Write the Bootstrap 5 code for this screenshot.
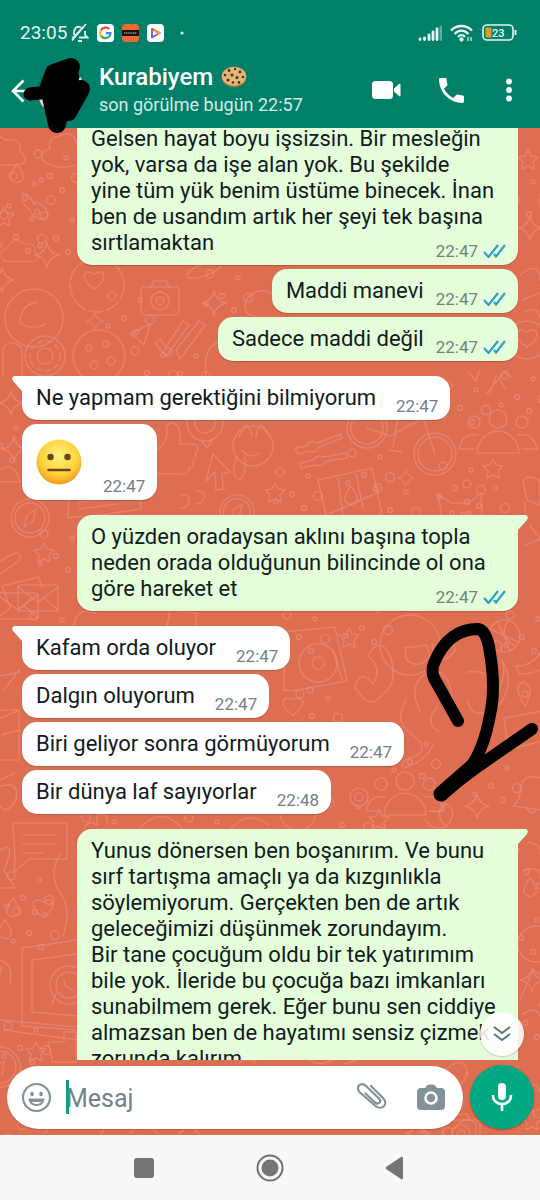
<!DOCTYPE html>
<html lang="tr">
<head>
<meta charset="utf-8">
<meta name="viewport" content="width=device-width, initial-scale=1">
<title>Kurabiyem</title>
<link href="https://cdn.jsdelivr.net/npm/bootstrap@5.3.0/dist/css/bootstrap.min.css" rel="stylesheet">
<style>
  body { font-family: Roboto, "Noto Sans", sans-serif; color: #111b21; background: #f7f8fa; }
  svg { display: block; flex: none; }
  .topbar { background: #008069; z-index: 2; }
  .statusbar { height: 52px; padding: 13px 19px 0 20px; font-size: 19px; line-height: 24px; color: #e3f4f0; }
  .appbar { height: 76px; padding: 2px 25px 0 11px; }
  .bare { border: 0; padding: 0; background: none; color: inherit; flex: none; }
  .contact-name { font-size: 24px; line-height: 28px; font-weight: 500; }
  .contact-seen { font-size: 18px; line-height: 28px; color: #d5ebe6; }
  .avatar { width: 46px; height: 46px; background: #00705c; }
  .scrawl { left: -19px; top: -14px; z-index: 3; }
  .actions { gap: 38px; padding-bottom: 2px; }
  .wall { background: #de6e52; }
  .doodles { left: 0; top: 0; width: 100%; height: 100%; }
  .messages { padding: 0 22px; gap: 4px; min-height: 0; flex: 1 1 0; }
  .bubble { font-size: 22px; line-height: 26px; padding: 9px 14px; border-radius: 15px; max-width: 441px; box-shadow: 0 1px 1px rgba(70,20,10,.25); flex: none; }
  .long { width: 89%; }
  .recv { background: #fff; align-self: flex-start; padding-right: 12px; }
  .sent { background: #e5ffdb; align-self: flex-end; padding-right: 12px; }
  .first { margin-top: 11px; }
  .first::before { content: ""; position: absolute; top: 0; width: 10px; height: 15px; background: inherit; }
  .recv.first { border-top-left-radius: 0; }
  .recv.first::before { left: -10px; clip-path: polygon(0 2px, 2px 0, 10px 0, 10px 15px, 1px 5px); }
  .sent.first { border-top-right-radius: 0; }
  .sent.first::before { right: -10px; clip-path: polygon(0 0, 8px 0, 10px 2px, 9px 5px, 0 15px); }
  .cut { padding-top: 0; margin-top: -2px; border-top-left-radius: 0; border-top-right-radius: 0; }
  .stamp { font-size: 17px; line-height: 20px; color: #71827d; margin-bottom: -5px; gap: 5px; }
  .recv .stamp { color: #71808a; }
  .long .stamp { position: absolute; right: 12px; bottom: 9px; }
  .gap-time { gap: 20px; }
  .sent.gap-time { gap: 12px; }
  .face-row { height: 76px; gap: 21px; padding-bottom: 9px; }
  .jump { width: 44px; height: 44px; right: 16px; bottom: 4px; background: rgba(255,255,255,.88); box-shadow: 0 1px 2px rgba(0,0,0,.2); }
  .big-two { right: 0; top: 490px; }
  .composer { padding: 5px 6px 6px 7px; gap: 7px; }
  .pill { height: 63px; padding: 0 18px 0 14px; background: #fff; box-shadow: 0 1px 1px rgba(70,20,10,.25); gap: 14px; min-width: 0; }
  .entry { font-size: 25px; line-height: 34px; height: 34px; padding-top: 3px; color: #111b21; outline: 0; min-width: 0; }
  .entry::placeholder { color: #75828a; opacity: 1; }
  .caret { width: 3px; height: 34px; left: 0; top: 0; background: #10a080; }
  .mic { width: 64px; height: 64px; background: #00a884; box-shadow: 0 1px 2px rgba(0,0,0,.3); }
  .sysnav { height: 65px; background: #f7f8fa; gap: 100px; }
</style>
</head>
<body>
<div class="d-flex flex-column vh-100 overflow-hidden">

  <header class="topbar position-relative text-white">
    <div class="statusbar d-flex justify-content-between">
      <div class="d-flex align-items-center">
        <span>23:05</span>
        <svg class="ms-1" width="18" height="20" viewBox="0 0 18 20" fill="none" stroke="#dff2ee" stroke-width="1.800"><path d="M1 14.500h1.500L12 4M3 12V9c0-3.500 3-6 6-5l1 .5M8 14.500h8.500L14 12V8M1 17.500L15 1M7 18h4"/></svg>
        <svg class="ms-2" width="17" height="18" viewBox="0 0 17 18"><rect width="17" height="18" rx="4" fill="#fff"/><g fill="none" stroke-width="2.200"><path d="M12.300 5A5.300 5.300 0 0 0 4 6.200" stroke="#e94335"/><path d="M4 6.200a5.300 5.300 0 0 0 0 5.600" stroke="#fbbc05"/><path d="M4 11.800a5.300 5.300 0 0 0 8 1" stroke="#34a853"/><path d="M12 12.800c1-1 1.500-2 1.500-3.600H8.800" stroke="#4285f4"/></g></svg>
        <svg class="ms-2" width="17" height="18" viewBox="0 0 17 18"><rect width="17" height="18" rx="4" fill="#f26a2b"/><path d="M0 6h17v6H0z" fill="#16110f"/><path d="M2 9h13" stroke="#d9cfc9" stroke-width="1.200" stroke-dasharray="1.200 .6"/></svg>
        <svg class="ms-2" width="17" height="18" viewBox="0 0 17 18"><rect width="17" height="18" rx="4" fill="#fff"/><g fill="none" stroke-width="2" stroke-linecap="round"><path d="M5 13V5" stroke="#4a7be8"/><path d="M5 5l7.500 4" stroke="#e9573e"/><path d="M12.500 9L5 13.500" stroke="#9a55d6"/><path d="M8 7l4 2" stroke="#f3a43b"/></g></svg>
        <svg class="ms-3" width="4" height="4" viewBox="0 0 4 4"><circle cx="2" cy="2" r="1.600" fill="#dff2ee"/></svg>
      </div>
      <div class="d-flex align-items-center gap-2 pe-1">
        <svg width="24" height="16" viewBox="0 0 24 16" stroke="#e8f6f3" stroke-width="2.800" stroke-linecap="round"><path d="M2 14.500v-.5M6.500 14.500V13M11 14.500V10M15 14.500V7M19 14.500V4"/><path d="M23 14.500V2" opacity=".4"/></svg>
        <svg width="24" height="18" viewBox="0 0 24 18" fill="none" stroke="#e8f6f3" stroke-width="2.300"><path d="M1 6.500C7 .5 16 .5 22 6.500M4.500 10C9 5.500 14 5.500 18.500 10M8 13c2-2.500 5-2.500 7 0"/><circle cx="11.500" cy="15.500" r="1" fill="#e8f6f3"/><path d="M18 13v4M21 13v4" stroke-width="1.200"/></svg>
        <svg width="35" height="17" viewBox="0 0 35 17"><rect x="1" y="1" width="30" height="15" rx="4" fill="none" stroke="#e8f6f3" stroke-width="1.600"/><rect x="3.500" y="3.500" width="6" height="10" rx="1" fill="#e59b2b"/><path d="M33.500 6v5" stroke="#e8f6f3" stroke-width="2"/><text x="10" y="12.500" font-size="11" font-weight="500" fill="#e8f6f3">23</text></svg>
      </div>
    </div>
    <div class="appbar d-flex align-items-center">
      <button class="bare" type="button" aria-label="Geri"><svg width="18" height="24" viewBox="0 0 18 24" fill="none" stroke="#fff" stroke-width="2.600"><path d="M18 12H2M12.500 1.500L2 12l10.500 10.500"/></svg></button>
      <div class="avatar rounded-circle position-relative ms-2 me-3">
        <svg class="scrawl position-absolute" width="76" height="84" viewBox="20 52 76 84"><path d="M40 92q1 8 5 13l5-4zM76 80l7-5 1 4-5 5z" fill="#e6cfcf"/><g fill="none" stroke="#000" stroke-linecap="round" stroke-linejoin="round"><path d="M32 92L52 90" stroke-width="13"/><path d="M73 65L56 71L51 85L59 122L64 96L72 74L70 110L83 87L58 102L56 76" stroke-width="18"/></g></svg>
      </div>
      <div class="flex-grow-1">
        <div class="contact-name d-flex align-items-center gap-2">Kurabiyem
          <svg width="26" height="22" viewBox="0 0 26 22"><ellipse cx="13" cy="11" rx="12.500" ry="10.300" fill="#a8763c"/><ellipse cx="13" cy="10.300" rx="12" ry="9.500" fill="#dfb87e"/><g fill="#5b2c14"><circle cx="8" cy="4.500" r="1.400"/><circle cx="14" cy="3" r="1.200"/><circle cx="19" cy="6" r="1.400"/><circle cx="4" cy="9" r="1.300"/><circle cx="11" cy="9" r="1.500"/><circle cx="16" cy="11.500" r="1.500"/><circle cx="22" cy="11" r="1.300"/><circle cx="7" cy="14" r="1.500"/><circle cx="12" cy="16.500" r="1.300"/><circle cx="18" cy="16.500" r="1.400"/></g></svg>
        </div>
        <div class="contact-seen">son görülme bugün 22:57</div>
      </div>
      <div class="actions d-flex align-items-center">
        <button class="bare" type="button" aria-label="Görüntülü arama"><svg width="29" height="20" viewBox="0 0 29 20" fill="#fff"><rect y="1" width="21" height="18" rx="3.500"/><path d="M22 8.500l5-4.500q1.500-.8 1.500.8v10.400q0 1.600-1.500.8l-5-4.500z"/></svg></button>
        <button class="bare" type="button" aria-label="Sesli arama"><svg width="25" height="25" viewBox="3 3 18 18" fill="#fff"><path d="M6.620 10.790a15.150 15.150 0 0 0 6.590 6.590l2.200-2.200a1 1 0 0 1 1.020-.24 11.400 11.400 0 0 0 3.570.57 1 1 0 0 1 1 1V20a1 1 0 0 1-1 1A17 17 0 0 1 3 4a1 1 0 0 1 1-1h3.500a1 1 0 0 1 1 1c0 1.250.2 2.450.57 3.570a1 1 0 0 1-.25 1.020z"/></svg></button>
        <button class="bare" type="button" aria-label="Diğer seçenekler"><svg width="13" height="24" viewBox="0 0 13 24" fill="#fff"><circle cx="7" cy="3.500" r="2.900"/><circle cx="7" cy="12" r="2.900"/><circle cx="7" cy="20.500" r="2.900"/></svg></button>
      </div>
    </div>
  </header>

  <main class="wall position-relative flex-grow-1 d-flex flex-column overflow-hidden">
    <svg class="doodles position-absolute" viewBox="0 128 540 1007" preserveAspectRatio="xMidYMid slice" fill="none" stroke="#f08d72" stroke-opacity=".62" stroke-width="1.500" stroke-linejoin="round" stroke-linecap="round" aria-hidden="true">
      <defs>
        <path id="star" d="M0-10l3 6 7 1-5 5 1 7-6-3-6 3 1-7-5-5 7-1z"/>
        <path id="spark" d="M0-12q2 10 12 12q-10 2-12 12q-2-10-12-12q10-2 12-12z"/>
        <path id="heart" d="M0 10C-16 0-10-12 0-5C10-12 16 0 0 10z"/>
        <g id="dots"><circle cx="-20" cy="-14" r="4"/><circle cx="-8" cy="8" r="2.500"/><circle cx="8" cy="-10" r="2"/><circle cx="18" cy="10" r="4.500"/><circle cx="4" cy="22" r="2.500"/><circle cx="-24" cy="16" r="2"/></g>
        <g id="camera"><rect x="-19" y="-12" width="38" height="28" rx="4"/><path d="M-9-12l3-6H6l3 6"/><circle cy="2" r="9"/><circle cy="2" r="4"/></g>
        <g id="compass"><circle r="19"/><circle r="15"/><path d="M6-9L-3-3-6 9 3 3z"/></g>
        <g id="mail"><rect x="-20" y="-13" width="40" height="26" rx="3"/><path d="M-20-11L0 4 20-11M-20 12l14-12M20 12L6 0"/></g>
        <g id="people"><circle cy="-16" r="9"/><path d="M-21 18c2-29 40-29 42 0z"/><circle cx="-24" cy="-13" r="6"/><circle cx="24" cy="-13" r="6"/><path d="M-20 0q-15-3-19 14h15M20 0q15-3 19 14H24"/></g>
        <g id="cookie"><circle r="26"/><circle cx="-10" cy="-8" r="3"/><circle cx="7" cy="-12" r="3"/><circle cx="12" cy="5" r="4"/><circle cx="-5" cy="9" r="4"/></g>
        <g id="cat"><path d="M-20 20V-4l-3-15 14 8H8l12-10 1 18v23zM-8 7q8 7 16 0"/><circle cx="-9" cy="-1" r="2"/><circle cx="8" cy="-1" r="2"/></g>
        <g id="cloud"><path d="M-24 12q-14-14 4-20q8-17 23-5q17-3 15 11q12 12-3 14z"/></g>
        <g id="ticks"><path d="M-23 4l5-4 6 8L5-18l6 4-23 31zM-2 11L21-18l6 4L2 20z"/></g>
        <g id="hand"><path d="M-14 24V0q14-8 10-24q10-8 14 6v12h15q6 4 0 9q3 4-2 8q2 5-4 7q0 7-9 6zM-28-4h14v30h-14z"/></g>
        <g id="bell"><path d="M-17 14q8-6 7-17q3-15 17-12q12 4 7 19q-2 10 5 15zM-3 17q5 8 9 0"/></g>
        <g id="note"><path d="M-30-22h54v36h-38l-15 13 1-13zM-20-10h33M-20-1h33M-20 8h20"/></g>
        <path id="drop" d="M0-10q-9 12-5 16q5 5 10 0q4-4-5-16z"/>
      </defs>
      <use href="#cloud" x="2" y="153"/><use href="#drop" x="17" y="174"/><use href="#dots" x="33" y="190"/><use href="#dots" x="58" y="168"/>
      <path d="M43 161q-5-9 7-12q-3-12 10-13q13-7 17 8M43 161q14 10 32 4"/><path d="M22 194q7 0 11 8q14 2 15 14q-8 7-17-3M22 202l8 8M27 194l8 11"/>
      <use href="#star" x="4" y="217"/><use href="#dots" x="24" y="229"/><use href="#cloud" transform="translate(22 253) scale(.7)"/><use href="#spark" x="47" y="255"/><use href="#spark" x="2" y="280"/>
      <circle cx="34" cy="318" r="29"/><path d="M20 323q0-18 17-21M20 323q12 8 26 1"/><use href="#dots" x="64" y="230"/><circle cx="97" cy="285" r="27" stroke-dasharray="15 3"/><use href="#heart" x="94" y="279"/>
      <use href="#camera" x="160" y="299"/><use href="#spark" x="214" y="303"/><use href="#spark" transform="translate(95 321) scale(.7)"/><use href="#dots" x="132" y="310"/><use href="#dots" x="230" y="288"/><ellipse cx="204" cy="270" rx="18" ry="6" transform="rotate(-20 204 270)"/>
      <path d="M130 334l20-10-6 21-7-7z"/><use href="#ticks" x="178" y="339"/><circle cx="45" cy="356" r="20"/><circle cx="45" cy="356" r="8"/><circle cx="45" cy="356" r="15" stroke-dasharray="5 4"/><path d="M3 377v-28q7-13 19 0v27"/><use href="#cookie" x="99" y="356"/><use href="#dots" x="155" y="365"/><path d="M246 300q13-15 27-6M246 300q-4 15 9 16M206 376q-4-30 15-35"/><use href="#dots" x="188" y="366"/>
      <use href="#star" x="528" y="160"/><use href="#dots" x="525" y="192"/><use href="#spark" x="530" y="228"/><path d="M520 275q20-16 20 6M522 300l20-8M524 312q18-10 18 20"/><use href="#heart" x="527" y="337"/><circle cx="527" cy="340" r="19"/>
      <use href="#spark" x="11" y="403"/><use href="#dots" x="8" y="438"/><use href="#spark" x="14" y="449"/><path d="M-5 474q18-18 25 8H-5"/>
      <circle cx="205" cy="423" r="18"/><circle cx="205" cy="423" r="10"/><path d="M201 440l6 8 6-9"/><use href="#hand" x="170" y="450"/>
      <path d="M206 481l7-27 17 18-8 2 1 15-7 1-1-18z"/><circle cx="253" cy="446" r="20"/><path d="M239 437q8-22 13-1M256 437q4-22 13-1M242 450q7 10 17 3M237 456q-8 22 3 23q7-6 5-22"/>
      <use href="#compass" x="30" y="518"/><path d="M69 494l70-7 2 22-48 7-9 9-2-9-14 2z"/><path d="M79 502l46-6M79 509l38-5"/><path d="M181 495q9-1 8 6t-8 7M196 491q9-1 8 6t-8 7"/><use href="#compass" transform="translate(237 512) scale(.9)"/><use href="#star" x="44" y="553"/><use href="#dots" x="64" y="548"/><use href="#mail" x="38" y="598"/><path d="M10 607L2 586l37-9 3 10"/><path d="M0 561l17-9q7 5 1 10L0 574"/>
      <circle cx="367" cy="428" r="20"/><circle cx="367" cy="428" r="16"/><circle cx="435" cy="454" r="21"/><circle cx="435" cy="454" r="17"/><path d="M367 428l23 8 33-18 12 36M399 411l-6 36M390 450l12 2"/>
      <use href="#people" x="498" y="435"/><path d="M295 448l12-2q2-7 11-3l23-9 1 4-23 9q-2 7-10 4l-11 3zM300 463l14-3q2-6 10-3l22-4 1 5-21 3q-3 7-11 4l-14 3z"/><use href="#dots" x="372" y="467"/><use href="#dots" x="463" y="480"/><use href="#spark" transform="translate(406 478) scale(.7)"/><use href="#star" x="493" y="469"/><path d="M318 480l54-12 10 46-53 14zM338 478l5 39M356 474l7 34M329 514l50-22"/><use href="#drop" x="351" y="496"/><use href="#dots" x="398" y="502"/><use href="#cat" x="461" y="514"/><use href="#dots" x="487" y="498"/><use href="#star" x="275" y="493"/><use href="#dots" x="300" y="486"/><path d="M468 372l8 9 3-10M486 394l18-22 7 5M490 394l6-18M500 380l5 8"/><use href="#dots" x="525" y="389"/><use href="#dots" x="468" y="400"/><path d="M523 481q6-8 17 0v24l-13-5zM525 512v-10"/><path d="M530 526l10 12M526 545l14-6"/>
      <use href="#mail" x="18" y="606"/><use href="#dots" x="54" y="630"/><path d="M74 626q2-20 22-13M170 610l27 3-2 18-28-4z"/><use href="#dots" x="307" y="629"/><use href="#star" x="349" y="638"/><path d="M284 690V632l51-5 12 54-55 10z"/><circle cx="318" cy="663" r="19"/><circle cx="318" cy="663" r="6"/><path d="M333 650l9 29"/><path d="M355 688q5-21 18-4q10-16-5-28q12-23 23 2q7 26-8 36q-10 13-20 4z"/><use href="#heart" x="293" y="705"/><use href="#dots" x="320" y="708"/><use href="#dots" x="370" y="620"/><circle cx="410" cy="645" r="30"/><path d="M405 648l22-3 3 11q-12 15-24 3zM432 645l21-4 2 10q-11 14-20 5z"/><circle cx="504" cy="636" r="16"/><path d="M490 629l28 13M498 622l12 29M509 620q-12 15 6 26M492 642q12-4 9 10"/><use href="#dots" x="530" y="629"/><path d="M515 666q17 1 27-16M520 674q18 0 22-7M516 666l4 9"/>
      <path d="M452 710q2-40-22-39q-24 12-10 40M468 672q21-4 30 20q9-20 4-31q15 24-6 48q-26 12-28-9"/><path d="M525 706q-13-20-2-24q13 4 2 24z"/><circle cx="525" cy="694" r="3"/><path d="M504 718l38-7v30l-34 9zM406 700q-13 23 6 34q18 15 4 22q-19 5-12 12q21-6 30-24M438 706q-15 16 1 26"/>
      <circle cx="310" cy="690" r="3"/><use href="#dots" x="418" y="754"/><use href="#people" x="405" y="797"/><use href="#dots" x="499" y="778"/><use href="#bell" x="530" y="792"/><use href="#spark" x="477" y="806"/><circle cx="359" cy="797" r="9"/><circle cx="359" cy="797" r="4"/><path d="M430 811q14 4 15-8q15 8 1 24q-16 4-21-8M445 803q-12 9 1 24"/><use href="#star" x="379" y="820"/><use href="#dots" x="350" y="817"/><circle cx="298" cy="812" r="18"/>
      <path d="M0 710h19v50H0M0 718l20-8M2 735l18-5"/><path d="M0 676l20-4M4 690l15-20"/><path d="M0 786q22-5 15 16q-9 13-15 4M0 780l15-7"/>
      <use href="#note" x="43" y="845"/><path d="M84 829q4-10 13-4v-12l10 3v8M140 828q23-25 45 4M230 830q17-21 39-5"/><use href="#dots" x="106" y="832"/><use href="#dots" x="209" y="832"/><path d="M0 850q17-10 4 20l11 18H0M60 855q-12 18 0 38q12 14 3 43"/><use href="#dots" x="31" y="890"/><use href="#heart" x="43" y="907"/><use href="#drop" x="13" y="908"/><use href="#drop" x="5" y="930"/><use href="#dots" x="37" y="925"/>
      <path d="M77 940l-55 8v78l55 4M77 954l-45 6v52l45 4M0 1020l77 7M4 1030l73 10"/><circle cx="69" cy="985" r="19"/><circle cx="69" cy="985" r="13"/><path d="M64 980q0 8 9 10M52 1004l4-10"/><path d="M2 966q-8 31-2 40M0 960q14 4 10 24"/><use href="#dots" x="28" y="1040"/><use href="#star" x="36" y="1052"/><path d="M48 1042h16v-10h12v30H53z"/><circle cx="0" cy="1067" r="20"/><circle cx="0" cy="1067" r="16"/><use href="#dots" x="4" y="1115"/><path d="M-4 1068l8-7-2 14"/>
      <use href="#dots" x="535" y="864"/><path d="M528 842q15 2 13 16M524 870q15-5 18 8"/><use href="#drop" x="530" y="888"/><use href="#dots" x="529" y="930"/><circle cx="536" cy="944" r="18"/><path d="M520 1000l13-30 8 5M523 1014q14-9 18 4"/><use href="#dots" x="533" y="1015"/><use href="#spark" x="532" y="980"/>
      <path d="M45 1133l4-5h55l-3 7M130 1133q10-12 28 0M178 1135q12-15 22 0M195 1132l4-4M240 1062q10-5 15 0M310 1060q12 8 25-2M345 1064l20-7M445 1070q20-17 23 5M452 1085q15-1 14-12M455 1128q9-13 21-5v14M523 1090q15-12 18 5M525 1110q10 3 16-3"/><use href="#dots" x="430" y="1122"/><use href="#camera" x="461" y="1132"/><use href="#spark" x="418" y="1133"/><use href="#star" x="532" y="1121"/>
    </svg>

    <section class="messages position-relative d-flex flex-column overflow-hidden" aria-label="Mesajlar">
      <div class="bubble sent long cut position-relative">Gelsen hayat boyu işsizsin. Bir mesleğin<br>yok, varsa da işe alan yok. Bu şekilde<br>yine tüm yük benim üstüme binecek. İnan<br>ben de usandım artık her şeyi tek başına<br>sırtlamaktan
        <span class="stamp d-flex align-items-center">22:47 <svg width="23" height="14" viewBox="0 0 23 14" fill="none" stroke="#2f9fc4" stroke-width="2.200"><path d="M1 8l4.500 5L15 1M11 10l2 2.500L22 1"/></svg></span></div>
      <div class="bubble sent d-flex align-items-end gap-time">Maddi manevi
        <span class="stamp d-flex align-items-center">22:47 <svg width="23" height="14" viewBox="0 0 23 14" fill="none" stroke="#2f9fc4" stroke-width="2.200"><path d="M1 8l4.500 5L15 1M11 10l2 2.500L22 1"/></svg></span></div>
      <div class="bubble sent d-flex align-items-end gap-time">Sadece maddi değil
        <span class="stamp d-flex align-items-center">22:47 <svg width="23" height="14" viewBox="0 0 23 14" fill="none" stroke="#2f9fc4" stroke-width="2.200"><path d="M1 8l4.500 5L15 1M11 10l2 2.500L22 1"/></svg></span></div>
      <div class="bubble recv first position-relative d-flex align-items-end gap-time">Ne yapmam gerektiğini bilmiyorum <span class="stamp">22:47</span></div>
      <div class="bubble recv face-row d-flex align-items-end">
        <svg class="align-self-center" width="46" height="46" viewBox="0 0 46 46" role="img" aria-label="Nötr yüz"><defs><radialGradient id="face" cx=".5" cy=".35" r=".65"><stop offset="0" stop-color="#fff27a"/><stop offset=".65" stop-color="#ffd13b"/><stop offset="1" stop-color="#f09a1d"/></radialGradient></defs><circle cx="23" cy="23" r="22.500" fill="url(#face)"/><circle cx="14.500" cy="18" r="3.200" fill="#6b4420"/><circle cx="31.500" cy="18" r="3.200" fill="#6b4420"/><path d="M12.500 31h21" stroke="#6b4420" stroke-width="2.600" stroke-linecap="round"/></svg>
        <span class="stamp">22:47</span></div>
      <div class="bubble sent long first position-relative">O yüzden oradaysan aklını başına topla<br>neden orada olduğunun bilincinde ol ona<br>göre hareket et
        <span class="stamp d-flex align-items-center">22:47 <svg width="23" height="14" viewBox="0 0 23 14" fill="none" stroke="#2f9fc4" stroke-width="2.200"><path d="M1 8l4.500 5L15 1M11 10l2 2.500L22 1"/></svg></span></div>
      <div class="bubble recv first position-relative d-flex align-items-end gap-time">Kafam orda oluyor <span class="stamp">22:47</span></div>
      <div class="bubble recv d-flex align-items-end gap-time">Dalgın oluyorum <span class="stamp">22:47</span></div>
      <div class="bubble recv d-flex align-items-end gap-time">Biri geliyor sonra görmüyorum <span class="stamp">22:47</span></div>
      <div class="bubble recv d-flex align-items-end gap-time">Bir dünya laf sayıyorlar <span class="stamp">22:48</span></div>
      <div class="bubble sent long first position-relative">Yunus dönersen ben boşanırım. Ve bunu<br>sırf tartışma amaçlı ya da kızgınlıkla<br>söylemiyorum. Gerçekten ben de artık<br>geleceğimizi düşünmek zorundayım.<br>Bir tane çocuğum oldu bir tek yatırımım<br>bile yok. İleride bu çocuğa bazı imkanları<br>sunabilmem gerek. Eğer bunu sen ciddiye<br>almazsan ben de hayatımı sensiz çizmek<br>zorunda kalırım</div>
      <button class="bare jump rounded-circle position-absolute d-flex align-items-center justify-content-center" type="button" aria-label="En alta git"><svg width="18" height="16" viewBox="0 0 18 16" fill="none" stroke="#62727a" stroke-width="2"><path d="M1 1l8 6 8-6M1 8l8 6 8-6"/></svg></button>
    </section>

    <svg class="big-two position-absolute" width="125" height="190" viewBox="415 618 125 190" fill="none" stroke="#000" stroke-width="12" stroke-linecap="round" stroke-linejoin="round" aria-hidden="true"><path d="M458 721L434 678Q431 671 434 663Q448 629 478 629Q487 630 490 653Q496 689 490 715Q484 749 470 768L441 794"/><path d="M441 794L480 765L532 729"/><path d="M441 794L474 765" stroke-width="15"/></svg>

    <form class="composer position-relative d-flex align-items-center">
      <div class="pill rounded-pill flex-grow-1 d-flex align-items-center">
        <button class="bare" type="button" aria-label="Emoji"><svg width="31" height="31" viewBox="0 0 31 31" fill="none" stroke="#83929a" stroke-width="2.200"><circle cx="15.500" cy="15.500" r="13.500"/><ellipse cx="11" cy="12" rx="1.800" ry="2.300" fill="#83929a" stroke="none"/><ellipse cx="20" cy="12" rx="1.800" ry="2.300" fill="#83929a" stroke="none"/><path d="M8.500 17.500h14q-1 5.500-7 5.500t-7-5.500z" stroke-width="1.800"/><path d="M9 18h13v2H9z" fill="#83929a" stroke="none"/></svg></button>
        <label class="position-relative flex-grow-1 d-flex"><input class="entry bare w-100" type="text" placeholder="Mesaj" aria-label="Mesaj"><span class="caret position-absolute"></span></label>
        <button class="bare me-2" type="button" aria-label="Dosya ekle"><svg width="31" height="30" viewBox="0 0 31 30" fill="none" stroke="#83929a" stroke-width="2.200" stroke-linecap="round"><path d="M15 4l11.500 11.500c7 7-1 13.500-7 8.500L4 10.500C-1 5 5-1 10 4l13 12.500c3 3.500-.5 6.500-4 4L9.500 11.500"/></svg></button>
        <button class="bare ms-2" type="button" aria-label="Kamera"><svg width="28" height="27" viewBox="0 0 28 27"><path d="M4 4h4l2-2.500Q11 .5 12 .5h4q1 0 2 1L20 4h4q4 0 4 4v14q0 4-4 4H4q-4 0-4-4V8q0-4 4-4z" fill="#83929a"/><circle cx="14" cy="14" r="5.500" fill="none" stroke="#fff" stroke-width="2.600"/></svg></button>
      </div>
      <button class="bare mic rounded-circle d-flex align-items-center justify-content-center" type="button" aria-label="Sesli mesaj"><svg width="22" height="28" viewBox="0 0 22 28"><rect x="7" width="8" height="17" rx="4" fill="#fff"/><path d="M2 12v1a9 8 0 0 0 18 0v-1M11 21v7" fill="none" stroke="#fff" stroke-width="2.600"/></svg></button>
    </form>
  </main>

  <nav class="sysnav d-flex align-items-center justify-content-center" aria-label="Sistem">
    <button class="bare" type="button" aria-label="Son uygulamalar"><svg width="22" height="20" viewBox="0 0 22 20"><rect x="0" width="20" height="20" rx="3" fill="#757575"/></svg></button>
    <button class="bare" type="button" aria-label="Ana ekran"><svg width="28" height="28" viewBox="0 0 28 28"><circle cx="14" cy="14" r="12.500" fill="none" stroke="#6f6f6f" stroke-width="2"/><circle cx="14" cy="14" r="8.500" fill="#757575"/></svg></button>
    <button class="bare" type="button" aria-label="Geri"><svg width="22" height="24" viewBox="0 0 22 24"><path d="M2 11L17 1q2-1 2 1v20q0 2-2 1L2 13q-1-1 0-2z" fill="#757575"/></svg></button>
  </nav>
</div>
<script src="https://cdn.jsdelivr.net/npm/bootstrap@5.3.0/dist/js/bootstrap.bundle.min.js"></script>
</body>
</html>
